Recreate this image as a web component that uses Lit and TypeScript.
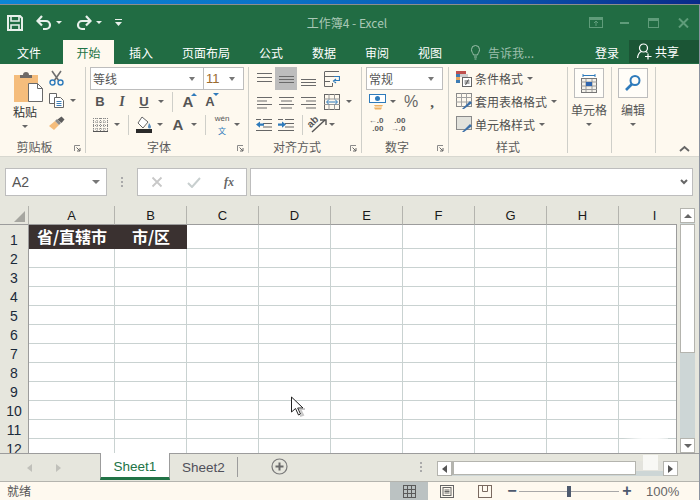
import { LitElement, html, css, svg } from "lit";
import { customElement } from "lit/decorators.js";

const S = (w: number, h: number, body: unknown) => html`<svg width=${w} height=${h} viewBox="0 0 ${w} ${h}" fill="none">${body}</svg>`;
const arrow = html`<span class="arr"></span>`;
const lines = (ys: number[], w = 15, xs?: number[], ws?: number[]) =>
  S(w, 16, ys.map((y, i) => svg`<rect x=${xs ? xs[i] : 0} y=${y} width=${ws ? ws[i] : w} height="1" fill="#6a6a6a"/>`));

const I = {
  save: S(16, 16, svg`<path d="M1 1h12l2 2v12H1z" stroke="#e8f0eb" stroke-width="2"/><path d="M4 1v5h8V1M4 15V10h8v5" stroke="#e8f0eb" stroke-width="1.6"/>`),
  undo: S(16, 16, svg`<path d="M2 6h8a4 4 0 0 1 0 8H7" stroke="#e8f0eb" stroke-width="2.2"/><path d="M6 1 1.5 6 6 10.5" stroke="#e8f0eb" stroke-width="2.2"/>`),
  redo: S(16, 16, svg`<path d="M14 6H6a4 4 0 0 0 0 8h3" stroke="#e8f0eb" stroke-width="2.2"/><path d="M10 1l4.500 5L10 10.500" stroke="#e8f0eb" stroke-width="2.2"/>`),
  qat: S(7, 8, svg`<rect width="7" height="1" fill="#e8f0eb"/><path d="M0 3h7L3.500 7z" fill="#e8f0eb"/>`),
  opts: S(14, 11, svg`<rect x=".5" y=".5" width="13" height="10" stroke="#5f9c7a"/><rect x="1" y="1" width="12" height="2" fill="#5f9c7a"/><path d="M7 9V4M5 6l2-2 2 2" stroke="#5f9c7a"/>`),
  min: S(9, 2, svg`<rect width="9" height="2" fill="#5f9c7a"/>`),
  max: S(11, 10, svg`<rect x=".5" y=".5" width="10" height="9" stroke="#5f9c7a"/><rect x="1" y="1" width="9" height="2" fill="#5f9c7a"/>`),
  close: S(11, 10, svg`<path d="M1 .5l9 9M10 .5l-9 9" stroke="#5f9c7a" stroke-width="2"/>`),
  bulb: S(9, 15, svg`<path d="M2.500 10C2 8 .5 7 .5 4.500a4 4 0 0 1 8 0C8.500 7 7 8 6.500 10z" stroke="#9dbfac"/><path d="M3 12h3M3.500 14h2" stroke="#9dbfac"/>`),
  person: S(15, 17, svg`<circle cx="6.500" cy="5" r="4" stroke="#fff" stroke-width="1.200"/><path d="M.5 15c.5-4 2.500-6 4-6.500M8.500 8.500c1 .3 1.500.7 2 1.200" stroke="#fff" stroke-width="1.200"/><path d="M8 13.500h6.500M11 10.500v6" stroke="#fff" stroke-width="1.200"/>`),
  paste: S(30, 35, svg`<rect x="1" y="3" width="24" height="27" fill="#f5bd7c"/><path d="M7 6V3h3a3 3 0 0 1 6 0h3v3z" fill="#6f6a66"/><path d="M15.500 11.500h9l5 5v13h-14z" fill="#fff" stroke="#6a6a6a"/><path d="M24.500 11.500v5h5" stroke="#6a6a6a"/>`),
  cut: S(15, 16, svg`<path d="M3 1l7 10M12 1L5 11" stroke="#6f6f6f" stroke-width="1.600"/><circle cx="3.500" cy="12.500" r="2.500" stroke="#2f7bbb" stroke-width="1.400"/><circle cx="11.500" cy="12.500" r="2.500" stroke="#2f7bbb" stroke-width="1.400"/>`),
  copy: S(15, 15, svg`<path d="M.5 .5h7v10h-7z" fill="#fff" stroke="#666"/><path d="M5.500 4.500h6l3 3v7h-9z" fill="#fff" stroke="#666"/><path d="M7.500 8.500h5M7.500 10.500h5M7.500 12.500h5" stroke="#3b7cb5"/>`),
  brush: S(17, 15, svg`<path d="M1 10l6-5 4 4-5 5z" fill="#f5bd7c"/><path d="M7 5l2-2 4 4-2 2z" fill="#8a8a8a"/><path d="M9.500 3.500l4-3 3 3-3 3.500z" fill="#5c5c5c"/>`),
  launcher: S(7, 7, svg`<path d="M.5 6V.5H6" stroke="#8a8a8a"/><path d="M2.500 2.500 6 6M6 3v3H3" stroke="#666"/>`),
  gridb: S(15, 14, svg`<g stroke="#888" stroke-dasharray="1 1"><path d="M.5 0v13M4 0v13M7.500 0v13M11 0v13M14.500 0v13M0 .5h15M0 4h15M0 7.500h15M0 11h15"/></g><rect y="13" width="15" height="1" fill="#555"/>`),
  fill: S(17, 17, svg`<path d="M6 1l6 5-5 6-5-5z" fill="#fff" stroke="#666"/><path d="M13 7c1.500 2 2 3 2 4a1.500 1.500 0 0 1-3 0c0-1 .5-2 1-4z" fill="#5b8fc0"/><rect y="13" width="16" height="4" fill="#2a2a2a"/>`),
  wen: html`<span class="wen"><i>wén</i><b>文</b></span>`,
  wrap: S(16, 16, svg`<path d="M1 .5h14M1 5.500h9M1 10.500h5" stroke="#666"/><path d="M.5 .5v15h8V12M.5 5v6" stroke="#666"/><path d="M10 5.500h5.500v4H10M12 8l-2.500 2 2.500 2" stroke="#2f7bbb" stroke-width="1.200"/>`),
  merge: S(16, 16, svg`<rect x=".5" y=".5" width="15" height="15" stroke="#666"/><path d="M0 5h16M0 10.500h16M5 0v5M10.500 0v5M5 10.500V16M10.500 10.500V16" stroke="#999"/><path d="M3 8h10" stroke="#2f7bbb"/><path d="M5 5.500 2.500 8 5 10.500M11 5.500 13.500 8 11 10.500" stroke="#2f7bbb"/>`),
  indL: S(16, 12, svg`<path d="M7 .5h9M7 4.500h9M7 8h9M0 11.500h16M0 .5h5" stroke="#666"/><path d="M0 5.500 4 2.500v2h4v2.200H4v2z" fill="#2f7bbb"/>`),
  indR: S(16, 12, svg`<path d="M7 .5h9M7 4.500h9M7 8h9M0 11.500h16M0 .5h5" stroke="#666"/><path d="M8 5.500 4 2.500v2H0v2.200h4v2z" fill="#2f7bbb"/>`),
  orient: html`<span class="orient"><svg width="22" height="16" viewBox="0 0 22 16" fill="none"><path d="M5 15 18 3" stroke="#555" stroke-width="1.400"/><path d="M13 3h6v5" stroke="#555" stroke-width="1.400"/></svg><em>ab</em></span>`,
  money: S(18, 16, svg`<rect x=".5" y=".5" width="16" height="8" fill="#fff" stroke="#2f7bbb"/><circle cx="8.500" cy="4.500" r="2.500" fill="#2f7bbb"/><path d="M5 11h9l-1 1.500H6zM5 13.500h8L12 15.500H6z" fill="#f0b162"/>`),
  inc: html`<span class="dec"><span>←.0</span><span>.00</span></span>`,
  dec: html`<span class="dec"><span>.00</span><span>→.0</span></span>`,
  cond: S(16, 16, svg`<rect width="10" height="3" fill="#c0504d"/><rect y="3" width="4" height="3" fill="#3d7cb4"/><rect y="6" width="4" height="3" fill="#e8a35a"/><rect y="9" width="4" height="3" fill="#3d7cb4"/><rect x="4" y="3" width="8" height="3" fill="#cfcfcf"/><rect x="6.500" y="6.500" width="9" height="9" fill="#fff" stroke="#666"/><path d="M8.500 10h5M8.500 12h5M12.500 8.500l-3 5.500" stroke="#555"/>`),
  table: S(16, 17, svg`<rect x=".5" y=".5" width="15" height="13" stroke="#8a8a8a"/><path d="M5.500 0v14M10.500 0v14M0 4.500h16M0 9h16" stroke="#a0a0a0"/><path d="M6 16l8-8 2 2-8 6z" fill="#3b6fa8"/>`),
  cstyle: S(16, 17, svg`<rect x=".5" y=".5" width="15" height="13" fill="#e2e2dc" stroke="#8a8a8a"/><path d="M6 16l8-8 2 2-8 6z" fill="#3b6fa8"/>`),
  cells: S(18, 19, svg`<path d="M3 1.500h12M3 0v3M15 0v3" stroke="#2f7bbb"/><rect x="1.500" y="4.500" width="15" height="14" fill="#f3f1ea" stroke="#777"/><path d="M1 8h16M1 12h16M1 15.500h16M6 5v13M12 5v13" stroke="#999"/><rect x="6" y="8" width="6" height="4" fill="#2f65ae"/>`),
  find: S(18, 18, svg`<circle cx="11" cy="6.500" r="4.500" stroke="#2f7bbb" stroke-width="2"/><path d="M8 10l-6 6" stroke="#2f7bbb" stroke-width="2.600"/>`),
  cancel: S(12, 12, svg`<path d="M1.500 1.500l9 9M10.500 1.500l-9 9" stroke="#c8c8c8" stroke-width="1.800"/>`),
  check: S(14, 12, svg`<path d="M1 7l4 4 8-9" stroke="#c8cfcf" stroke-width="2"/>`),
  chevDown: S(8, 6, svg`<path d="M1 1l3 3 3-3" stroke="#666" stroke-width="2"/>`),
  chevUp: S(11, 7, svg`<path d="M1 6l4.500-4L10 6" stroke="#666" stroke-width="1.800"/>`),
  corner: S(11, 11, svg`<path d="M11 0v11H0z" fill="#a6a6a0"/>`),
  plus: S(17, 17, svg`<circle cx="8.500" cy="8.500" r="7.500" stroke="#7a7a7a" stroke-width="1.200"/><path d="M4.500 8.500h8M8.500 4.500v8" stroke="#6a6a6a" stroke-width="2"/>`),
  normal: S(13, 13, svg`<rect x=".5" y=".5" width="12" height="12" stroke="#5a5a5a"/><path d="M4.500 0v13M8.500 0v13M0 4.500h13M0 8.500h13" stroke="#5a5a5a"/>`),
  layout: S(14, 13, svg`<rect x=".5" y=".5" width="13" height="12" stroke="#666"/><rect x="3" y="2.500" width="8" height="8" stroke="#666"/><path d="M4.500 5h5M4.500 6.500h5M4.500 8h5" stroke="#666"/>`),
  brk: S(14, 13, svg`<rect x=".5" y=".5" width="13" height="12" stroke="#7a6a60"/><path d="M4.500 0v6.500h5V0M9.500 6.500" stroke="#7a6a60"/>`),
  cursor: S(16, 22, svg`<path d="M1.500 1v15l4-3.500 3 6.500 2-1-2.800-6H13z" fill="#fff" stroke="#222"/><path d="M8 19l3-1-3-6 5 0" stroke="#999" stroke-width="2" opacity=".55" transform="translate(2 1)"/>`),
};

const COLS = ["A", "B", "C", "D", "E", "F", "G", "H", "I"];
const ROWS = [1, 2, 3, 4, 5, 6, 7, 8, 9, 10, 11, 12];

@customElement("app-root")
export class AppRoot extends LitElement {
  static styles = css`
    :host { display: block; width: 700px; height: 500px; overflow: hidden; position: relative; background: #e6e6dd;
      font-family: "Noto Sans CJK SC", "Liberation Sans", sans-serif; font-size: 12px; color: #4a4a4a; }
    svg { display: block; }
    .strip { height: 4px; background: linear-gradient(90deg, #0b86d4 0%, #0a72c6 40%, #0a56ae 70%, #0a2a8a 100%); border-bottom: 1px solid #8d8d8d; }
    .titlebar { height: 35px; background: #216c43; display: grid; align-items: center; justify-items: center;
      grid-template-columns: 7px 16px 13px 16px 2px 10px 12px 16px 2px 10px 10px 8px 179px 92px 196px 14px 17px 9px 19px 11px 19px 11px; color: #a9c8b6; }
    .title { font-size: 12px; white-space: nowrap; }
    .arr { display: block; width: 0; height: 0; border-left: 3px solid transparent; border-right: 3px solid transparent; border-top: 3px solid #666; }
    .titlebar .arr { border-top-color: #e8f0eb; }
    .tabs { height: 24px; background: #216c43; display: grid; align-items: center; justify-items: center; color: #fff;
      grid-template-columns: 58px 5px 51px 54px 76px 54px 52px 54px 52px 10px 18px 101px 44px 71px; }
    .tab-on { background: #fef9ef; color: #217346; align-self: stretch; justify-self: stretch; display: flex; align-items: center; justify-content: center; }
    .tell { color: #9dbfac; justify-self: start; padding-left: 4px; white-space: nowrap; }
    .share { background: #1b5535; align-self: stretch; justify-self: stretch; display: flex; align-items: center; gap: 3px; padding-left: 8px; margin-bottom: 1px; }
    .ribbon { padding-top: 3px; box-sizing: border-box; background: #fef9ef; display: grid;
      grid-template-columns: 86px 163px 113px 87px 119px 44px 44px 44px; height: 93px; border-bottom: 1px solid #d8d8d0; }
    .grp { height: 86px; border-right: 1px solid #cfcfc9; display: flex; flex-direction: column; box-sizing: border-box; min-width: 0; }
    .grp.end { border-right: 0; align-items: flex-end; justify-content: flex-end; padding-right: 10px; padding-bottom: 1px; }
    .body { height: 74px; }
    .lab { height: 12px; line-height: 12px; text-align: center; color: #5c5c5c; font-size: 12px; display: grid; grid-template-columns: 1fr auto 1fr 16px; padding: 0 4px; align-items: center; }
    .lab span { grid-column: 2; }
    .lab svg { grid-column: 4; justify-self: end; margin-top: 3px; }
    .lab.plain { grid-template-columns: 1fr auto 1fr; }
    .clip { display: grid; grid-template-columns: 46px 1fr; }
    .paste { display: flex; flex-direction: column; padding: 5px 0 0 13px; line-height: 14px; font-size: 12px; }
    .paste span.t { margin-top: -2px; width: 25px; color: #333; }
    .paste .arr { margin: 6px 0 0 9px; }
    .clipr { display: grid; grid-template-rows: 22px 23px 23px; grid-template-columns: 20px 14px; align-items: center; justify-items: center; }
    .rows { display: grid; grid-template-rows: 23px 23px 23px; }
    .r { display: grid; align-items: center; justify-items: center; }
    .combo { background: #fff; border: 1px solid #bdbdbd; box-sizing: border-box; height: 23px; display: flex; align-items: center; justify-content: space-between; padding: 0 8px 0 2px; color: #555; }
    .combo .arr { border-top-color: #777; border-left-width: 3.500px; border-right-width: 3.500px; border-top-width: 4px; }
    .fcombos { display: grid; grid-template-columns: 114px 40px; padding-left: 4px; }
    .fcombos .combo + .combo { border-left: 0; }
    .sz { color: #9a6b2f; font-family: "Liberation Sans", sans-serif; font-size: 13px; }
    .f2 { grid-template-columns: 22px 22px 22px 12px 10px 22px 22px; padding-left: 3px; justify-content: start; }
    .f3 { grid-template-columns: 23px 10px 12px 20px 12px 24px 8px 14px 20px 10px; padding-left: 3px; justify-content: start; }
    .vs { width: 1px; height: 20px; background: #cfcfc9; }
    .L { font-family: "Liberation Sans", sans-serif; font-weight: bold; font-size: 13px; color: #555; position: relative; line-height: 14px; }
    .it { font-style: italic; font-family: "Liberation Serif", serif; font-size: 14px; }
    .un { text-decoration: underline; }
    .big { font-size: 15px; }
    .L sup, .L sub { position: absolute; width: 0; height: 0; border-left: 3px solid transparent; border-right: 3px solid transparent; left: 8px; }
    .L sup { border-bottom: 3px solid #2f7bbb; top: -2px; }
    .L sub { border-top: 3px solid #2f7bbb; top: -2px; }
    .wen { display: flex; flex-direction: column; align-items: center; height: 21px; }
    .wen i { font-style: normal; font-family: "Liberation Sans", sans-serif; font-size: 8px; line-height: 10px; color: #555; display: block; height: 10px; }
    .wen b { font-weight: normal; font-size: 8px; line-height: 11px; color: #2f7bbb; display: block; height: 11px; margin-top: 1px; }
    .a1 { grid-template-columns: 22px 22px 22px 26px; padding-left: 4px; justify-content: start; }
    .a2 { grid-template-columns: 22px 22px 22px 26px 8px; padding-left: 4px; justify-content: start; }
    .a3 { grid-template-columns: 22px 22px 10px 22px 6px; padding-left: 4px; justify-content: start; }
    .on { background: #bdbdbd; align-self: stretch; justify-self: stretch; display: flex; align-items: center; justify-content: center; }
    .orient { position: relative; display: block; width: 22px; height: 16px; }
    .orient em { position: absolute; left: 0; top: -1px; font: bold 10px/12px "Liberation Sans", sans-serif; color: #555; transform: rotate(-45deg); }
    .n1 { padding-left: 4px; display: grid; grid-template-columns: 77px; }
    .n2 { grid-template-columns: 23px 8px 28px 14px; padding-left: 4px; justify-content: start; }
    .n3 { grid-template-columns: 22px 22px; padding-left: 3px; justify-content: start; }
    .pct { font: 16px "Liberation Sans", sans-serif; color: #666; }
    .cma { font: bold 15px/8px "Liberation Serif", serif; color: #555; }
    .dec { display: flex; flex-direction: column; font: bold 8px/8px "Liberation Sans", sans-serif; color: #5a5a5a; align-items: flex-end; }
    .sty { display: grid; grid-template-rows: 23px 23px 23px; padding-left: 7px; }
    .st { display: flex; align-items: center; white-space: nowrap; color: #505050; }
    .st svg { margin-right: 3px; }
    .st .arr { margin-left: 4px; }
    .bigbtn { display: flex; flex-direction: column; align-items: center; padding: 1px 1px 0 0; box-sizing: border-box; }
    .bb { width: 30px; height: 30px; box-sizing: border-box; border: 1px solid #bdbdbd; background: #fffdf8; display: flex; align-items: center; justify-content: center; }
    .bigbtn .t { margin-top: 5px; line-height: 14px; white-space: nowrap; color: #555; }
    .bigbtn .arr { margin-top: 6px; }
    .fbar { height: 49px; box-sizing: border-box; padding: 11px 7px 10px 5px; display: grid; grid-template-columns: 102px 30px 110px 446px; }
    .fx-box { background: #fff; border: 1px solid #bdbdbd; box-sizing: border-box; height: 28px; }
    .name { display: flex; align-items: center; justify-content: space-between; padding: 0 6px; font: 14px "Liberation Sans", sans-serif; color: #555; }
    .name .arr { border-left-width: 4px; border-right-width: 4px; border-top-width: 4px; border-top-color: #777; }
    .dots { display: flex; flex-direction: column; gap: 2px; align-items: center; justify-content: center; height: 28px; }
    .dots i { width: 2px; height: 2px; background: #aaa; display: block; }
    .btns { display: grid; grid-template-columns: 37px 37px 34px; justify-items: center; align-items: center; }
    .fxt { font: italic bold 12px "Liberation Serif", serif; color: #666; }
    .input { margin-left: 3px; display: flex; align-items: center; justify-content: flex-end; padding-right: 4px; }
    .area { height: 247px; display: flex; }
    .sheet { position: relative; width: 677px; height: 247px; overflow: hidden; display: grid; grid-template-columns: 29px 86px repeat(8, 72px); grid-template-rows: 19px 24px repeat(11, 19px); font-family: "Liberation Sans", sans-serif; flex: none; }
    .sheet::after { content: ""; position: absolute; right: 0; top: 18px; bottom: 0; width: 1px; background: #9c9c9c; }
    .sheet > div { box-sizing: border-box; display: flex; align-items: center; justify-content: center; }
    .hc { background: #e6e6dd; font-size: 13px; color: #1a1a1a; border-bottom: 1px solid #9c9c9c; border-right: 1px solid #b4b4ae; }
    .top0 { align-items: flex-end !important; justify-content: flex-end !important; border-bottom: 1px solid #9c9c9c; border-right: 1px solid #b4b4ae; background: #e6e6dd; padding: 0 3px 2px 0; }
    .rh { background: #e6e6dd; font-size: 14px; color: #1a2a3a; border-right: 1px solid #9c9c9c; }
    .rh.first { align-items: flex-end !important; padding-bottom: 1px; }
    .c { background: #fff; border-right: 1px solid #c9d2d1; border-bottom: 1px solid #c9d2d1; }
    .c.head { background: #3a3130; color: #fff; font: bold 16px "Noto Sans CJK SC", sans-serif; border: 0; line-height: 22px; padding-bottom: 2px; }
    .v { width: 15px; margin-left: 3px; margin-top: 2px; height: 245px; display: flex; flex-direction: column; background: #cdd6d6; }
    .vb { height: 15px; box-sizing: border-box; background: #fff; border: 1px solid #b4b4ae; display: flex; align-items: center; justify-content: center; flex: none; }
    .vt { height: 129px; margin-top: 1px; box-sizing: border-box; background: #fff; border: 1px solid #b4b4ae; flex: none; }
    .vs2 { flex: 1; }
    .up, .dn { width: 0; height: 0; border-left: 4px solid transparent; border-right: 4px solid transparent; }
    .up { border-bottom: 4px solid #666; }
    .dn { border-top: 4px solid #666; }
    .sbar { box-sizing: border-box; border-top: 1px solid #9c9c9c; border-bottom: 1px solid #b4b4ae; display: flex; align-items: stretch; background: #e6e6dd; height: 29px; }
    .nav { width: 100px; box-sizing: border-box; display: grid; grid-template-columns: 29px 29px; padding-left: 15px; align-items: center; justify-items: center; }
    .lt, .rt { width: 0; height: 0; border-top: 4px solid transparent; border-bottom: 4px solid transparent; }
    .lt { border-right: 5px solid #c0c0ba; }
    .rt { border-left: 5px solid #c0c0ba; }
    .sh { font: 13.500px "Liberation Sans", sans-serif; display: flex; align-items: center; justify-content: center; box-sizing: border-box; }
    .s1 { width: 70px; margin-top: -1px; background: #fff; color: #217346; border-left: 1px solid #9c9c9c; border-right: 1px solid #9c9c9c; border-bottom: 3px solid #217346; margin-bottom: 1px; padding-top: 2px; }
    .s2 { width: 67px; color: #50505a; margin-bottom: 3px; padding-top: 2px; }
    .sep { width: 1px; background: #9c9c9c; margin: 3px 0 4px; }
    .add { margin-left: 33px; width: 17px; align-self: center; margin-top: -2px; }
    .hdots { margin-left: 131px; width: 4px; display: flex; flex-direction: column; justify-content: center; gap: 2px; align-items: center; margin-bottom: 2px; }
    .hdots i { width: 2px; height: 2px; background: #aaa; display: block; }
    .h { margin-left: 14px; width: 241px; height: 15px; margin-top: 7px; display: flex; background: #cdd6d6; }
    .hb { width: 15px; height: 15px; box-sizing: border-box; background: #fff; border: 1px solid #b4b4ae; display: flex; align-items: center; justify-content: center; }
    .hb .lt { border-right-color: #555; }
    .hb .rt { border-left-color: #555; }
    .ht { width: 184px; height: 14px; box-sizing: border-box; background: #fff; border: 1px solid #b4b4ae; border-left-width: 2px; }
    .hgap { flex: 1; position: relative; background: linear-gradient(180deg, #e3e3dd 0 10px, #cdd6d6 10px); }
    .hgap::before { content: ""; position: absolute; left: 7px; top: -6px; width: 15px; height: 15px; background: #f8f8f5; }
    .status { height: 18px; background: #fef9ef; display: flex; align-items: stretch; }
    .rdy { padding-left: 7px; width: 383px; line-height: 18px; color: #555; font-size: 12px; flex: none; }
    .vw { width: 38px; display: flex; align-items: center; justify-content: center; }
    .vw.on2 { background: #bbc2c2; }
    .zoomb { margin-left: 1px; display: grid; grid-template-columns: 14px 100px 16px 1fr; align-items: center; justify-items: center; flex: 1; font-family: "Liberation Sans", sans-serif; }
    .pm { font: bold 16px/16px "Liberation Sans", sans-serif; color: #4d5a6e; }
    .track { width: 100px; height: 1px; background: #a8a8a8; position: relative; }
    .track i { position: absolute; left: 48px; top: -5px; width: 4px; height: 11px; background: #4d5a6e; display: block; }
    .pc { font-size: 13px; color: #666; justify-self: start; padding-left: 11px; }
    .smudge { position: absolute; left: 622px; top: 422px; width: 46px; height: 31px; background: radial-gradient(ellipse at 60% 80%, rgba(255,255,255,.85) 30%, rgba(255,255,255,0) 72%); }
    .cursor { position: absolute; left: 290px; top: 396px; }
    .winedge { position: absolute; right: 0; top: 4px; bottom: 0; width: 1px; background: #8d94a0; }
  `;

  render() {
    return html`
      <div class="strip"></div>
      <div class="titlebar">
        <span></span>${I.save}<span></span>${I.undo}<span></span>${arrow}<span></span>${I.redo}<span></span>${arrow}<span></span>${I.qat}
        <span></span><span class="title">工作簿4 - Excel</span><span></span>
        ${I.opts}<span></span>${I.min}<span></span>${I.max}<span></span>${I.close}
      </div>
      <div class="tabs">
        <span>文件</span><span></span><span class="tab-on">开始</span><span>插入</span><span>页面布局</span><span>公式</span><span>数据</span><span>审阅</span><span>视图</span>
        <span></span>${I.bulb}<span class="tell">告诉我...</span><span>登录</span>
        <span class="share">${I.person}<span>共享</span></span>
      </div>
      <div class="ribbon">
        <div class="grp">
          <div class="body clip">
            <div class="paste">${I.paste}<span class="t">粘贴</span>${arrow}</div>
            <div class="clipr">${I.cut}<span></span>${I.copy}${arrow}${I.brush}<span></span></div>
          </div>
          <div class="lab"><span>剪贴板</span>${I.launcher}</div>
        </div>
        <div class="grp">
          <div class="body rows">
            <div class="fcombos">
              <div class="combo"><span>等线</span>${arrow}</div>
              <div class="combo"><span class="sz">11</span>${arrow}</div>
            </div>
            <div class="r f2">
              <span class="L">B</span><span class="L it">I</span><span class="L un">U</span>${arrow}<i class="vs"></i>
              <span class="L big">A<sup></sup></span><span class="L">A<sub></sub></span>
            </div>
            <div class="r f3">
              ${I.gridb}${arrow}<i class="vs"></i>${I.fill}${arrow}<span class="L big">A</span>${arrow}<i class="vs"></i>${I.wen}${arrow}
            </div>
          </div>
          <div class="lab"><span>字体</span>${I.launcher}</div>
        </div>
        <div class="grp">
          <div class="body rows">
            <div class="r a1">
              ${lines([2, 6, 10])}
              <span class="on">${lines([5, 8, 11], 15)}</span>
              ${lines([8, 11, 14])}
              ${I.wrap}
            </div>
            <div class="r a2">
              ${lines([3, 6.5, 10, 13.5], 15, [0, 0, 0, 0], [15, 10, 15, 10])}
              ${lines([3, 6.5, 10, 13.5], 15, [0, 2, 0, 2], [15, 11, 15, 11])}
              ${lines([3, 6.5, 10, 13.5], 15, [0, 5, 0, 5], [15, 10, 15, 10])}
              ${I.merge}${arrow}
            </div>
            <div class="r a3">${I.indL}${I.indR}<i class="vs"></i>${I.orient}${arrow}</div>
          </div>
          <div class="lab"><span>对齐方式</span>${I.launcher}</div>
        </div>
        <div class="grp">
          <div class="body rows">
            <div class="n1"><div class="combo"><span>常规</span>${arrow}</div></div>
            <div class="r n2">${I.money}${arrow}<span class="pct">%</span><span class="cma">,</span></div>
            <div class="r n3">${I.inc}${I.dec}</div>
          </div>
          <div class="lab"><span>数字</span>${I.launcher}</div>
        </div>
        <div class="grp">
          <div class="body sty">
            <div class="st">${I.cond}<span>条件格式</span>${arrow}</div>
            <div class="st">${I.table}<span>套用表格格式</span>${arrow}</div>
            <div class="st">${I.cstyle}<span>单元格样式</span>${arrow}</div>
          </div>
          <div class="lab plain"><span>样式</span></div>
        </div>
        <div class="grp">
          <div class="body bigbtn"><div class="bb">${I.cells}</div><span class="t">单元格</span>${arrow}</div>
        </div>
        <div class="grp">
          <div class="body bigbtn"><div class="bb">${I.find}</div><span class="t">编辑</span>${arrow}</div>
        </div>
        <div class="grp end">${I.chevUp}</div>
      </div>
      <div class="fbar">
        <div class="fx-box name"><span>A2</span>${arrow}</div>
        <div class="dots"><i></i><i></i><i></i></div>
        <div class="fx-box btns">${I.cancel}${I.check}<span class="fxt">fx</span></div>
        <div class="fx-box input">${I.chevDown}</div>
      </div>
      <div class="area">
        <div class="sheet">
          <div class="top0">${I.corner}</div>
          ${COLS.map((c) => html`<div class="hc">${c}</div>`)}
          ${ROWS.map((r) => html`
            <div class="rh ${r === 1 ? "first" : ""}">${r}</div>
            ${COLS.map((c) => {
              if (r === 1 && c === "A") return html`<div class="c head">省/直辖市</div>`;
              if (r === 1 && c === "B") return html`<div class="c head">市/区</div>`;
              return html`<div class="c"></div>`;
            })}
          `)}
        </div>
        <div class="v">
          <div class="vb"><i class="up"></i></div>
          <div class="vt"></div>
          <div class="vs2"></div>
          <div class="vb"><i class="dn"></i></div>
        </div>
      </div>
      <div class="sbar">
        <div class="nav"><i class="lt"></i><i class="rt"></i></div>
        <div class="sh s1">Sheet1</div>
        <div class="sh s2">Sheet2</div>
        <div class="sep"></div>
        <div class="add">${I.plus}</div>
        <div class="hdots"><i></i><i></i><i></i></div>
        <div class="h">
          <div class="hb"><i class="lt"></i></div>
          <div class="ht"></div>
          <div class="hgap"></div>
          <div class="hb"><i class="rt"></i></div>
        </div>
      </div>
      <div class="status">
        <div class="rdy">就绪</div>
        <div class="vw on2">${I.normal}</div>
        <div class="vw">${I.layout}</div>
        <div class="vw">${I.brk}</div>
        <div class="zoomb"><span class="pm">−</span><div class="track"><i></i></div><span class="pm">+</span><span class="pc">100%</span></div>
      </div>
      <div class="smudge"></div>
      <div class="cursor">${I.cursor}</div>
      <div class="winedge"></div>
    `;
  }
}
